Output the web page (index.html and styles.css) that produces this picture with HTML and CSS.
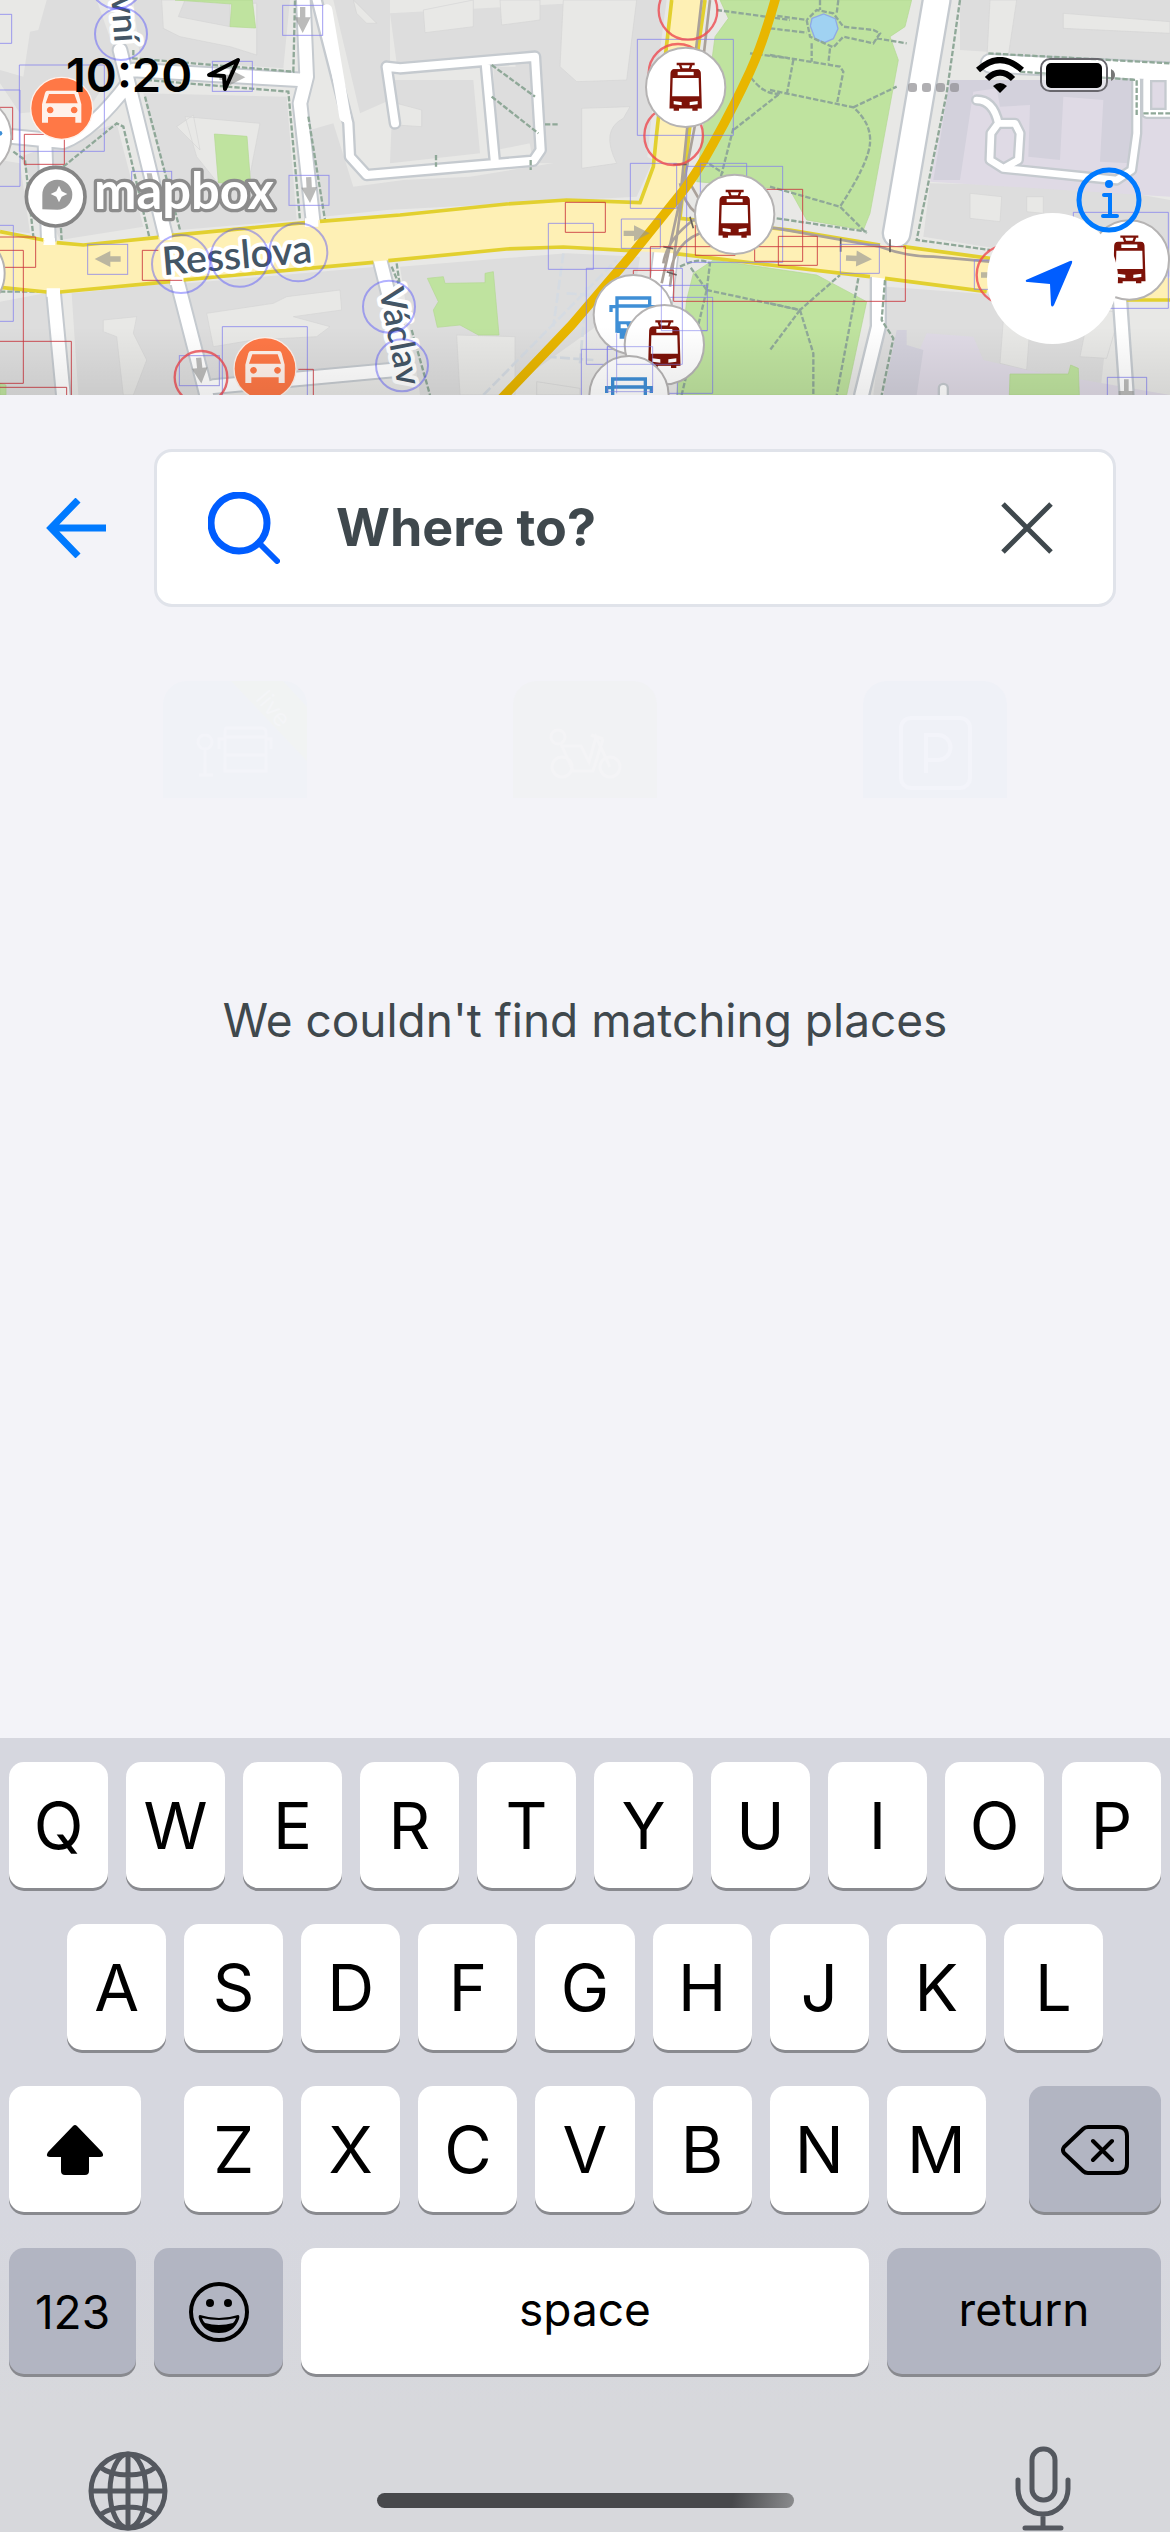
FILE: index.html
```html
<!DOCTYPE html>
<html lang="en">
<head>
<meta charset="utf-8">
<meta name="viewport" content="width=device-width, initial-scale=1">
<title>Where to?</title>
<link rel="stylesheet" href="styles.css">
</head>
<body>
<header class="map">
  <svg class="map-art" viewBox="0 0 3510 1185" role="img" aria-label="Map around Resslova">
    <defs>
      <linearGradient id="fade" x1="0" y1="0" x2="0" y2="1"><stop offset="0" stop-opacity="0"/><stop offset="1" stop-opacity=".08"/></linearGradient>
      <g id="tram">
        <circle r="119" fill="#fff" stroke="#b5b3b3" stroke-width="6"/>
        <g fill="none" stroke="#7d1208" stroke-width="7"><path d="M-27-70H27M-17-68l5 14M17-68l-5 14M-15-54H15" /><path d="M-34-51H34q7 0 8 8L45 60h-90l3-103q1-8 8-8z"/></g>
        <path fill="#7d1208" fill-rule="evenodd" d="M-36-54H36q7 0 7 14v12H-43v-12q0-14 7-14zM-24-47v11H24v-11zM-45 27H45V62H36v8H20v-8h-40v8h-16v-8h-9zM-36 41v10l24 3V44zM36 41 12 44v10l24-3z"/>
      </g>
      <g id="bus">
        <circle r="119" fill="#fff" stroke="#b5b3b3" stroke-width="6"/>
        <g fill="none" stroke="#3f8fd6" stroke-width="10"><path d="M-49-50H49V49H-49zM-49-26H49M-49-24H-67V-8M49-24H67V-8"/></g>
        <path fill="#3f8fd6" fill-rule="evenodd" d="M-49 20H49V55H41V72H22V55H-22V72H-41V55H-49zM-38 29v12h22l-5-12zM38 29v12H16l5-12z"/>
      </g>
      <g id="car">
        <circle r="93" fill="#ff7846" stroke="#fff1ea" stroke-width="4"/>
        <path fill="#fff1ea" fill-rule="evenodd" d="M-42-53H42q6 0 8 7L59-12V43H41V26H-41V43H-59V-12L-50-46q2-7 8-7zM-38-43-48-15H48L38-43zM-35-5a10 10 0 1 0 1 0zM37-5a10 10 0 1 0 1 0z"/>
      </g>
      <path id="arrow" d="M-39-8H-8V-24L39 0-8 24V8H-39z"/>
      <rect id="tag" x="-60" y="-45" width="120" height="90"/>
    </defs>
    <rect width="3510" height="1185" fill="#e8e8e6"/>

    <!-- building blocks -->
    <g fill="#ddd">
      <path d="M140 0H290L350 170 330 230 270 320 60 340 0 250V210L70 230 90 95 115 90zM400 0H870L850 205 420 175zM60 470 350 370 430 680 180 720zM430 280 860 290 890 660 540 690 440 330zM0 480 60 490 90 700 0 690zM0 905 135 880 200 1185H0zM215 880 510 850 600 1185H235zM560 850 1130 800 1180 1100 620 1160zM1000 0H1170V300L1080 340zM930 390 1000 370 1060 560 1210 540 1410 530 1900 450 1960 480 1910 590 1160 630 970 650z"/>
      <path d="M1170 40 1900 0H2000L1960 300 1940 490 1600 490 1540 160 1190 190zM1180 240 1420 240 1440 460 1170 490zM1480 200 1590 200 1590 430 1490 450zM1200 800 1700 760 1920 770 1900 900 1500 1185H1260z"/>
      <path d="M2880 0H3510V190L2880 150zM2790 550 3290 560 3510 600V830L2770 710zM2660 860 3060 890 3330 910 3300 1185H2620z"/>
    </g>
    <g fill="#e8e8e6" stroke="#d5d5d4" stroke-width="2">
      <path d="M485 0H555L535 50 690 80V10H770V165L690 140 540 110 490 85zM555 350 780 370 745 550 650 545 590 470zM530 380 580 345 600 450zM620 940 820 910 860 890 1020 870 1025 930 880 950 990 980 950 1010 760 1020 640 1040zM310 960 410 950 400 1000 440 1080 400 1185H370L350 1010 310 995zM1060 0 1130 70 1100 70 1070 40z"/>
      <path d="M1270 30 1420 0V80L1275 98zM1500 0H1620V60L1505 75zM1690 0 1910 0 1880 240 1730 245 1680 200zM1745 325 1890 320 1870 355Q1800 390 1850 490L1745 505zM1190 310 1265 330V380L1190 375zM1370 1005 1545 1010V1185H1380zM1610 1145 1740 1165V1185H1610z"/>
      <path d="M2970 0H3050L3020 200 2960 190zM3190 40 3510 65V100L3190 85zM2910 580 3005 590 3000 665 2910 655zM3080 590 3130 590 3130 640 3080 635zM3010 960 3090 975 3080 1110 3000 1090zM3270 920 3360 940 3320 1075 3240 1070z"/>
    </g>
    <g fill="#dfdae5"><path d="M2850 240 3510 240V590L2790 545zM2780 1000 2920 1010 2950 1080 3080 1110 3510 1185H2700z"/></g>
    <path fill="#d3d1dc" d="M2850 240 3410 240 3390 490 3300 485 3310 300 3190 290 3180 480 3085 470 3090 315 3000 320 2990 265 2920 275 2880 540 2800 540zM2690 990 2720 990 2720 1035 2770 1050 2750 1185H2650z"/>

    <!-- parks and pond -->
    <g fill="#bfe39f" stroke="#b3d893" stroke-width="2">
      <path d="M2160 0H2735L2715 80 2670 110 2695 180 2610 640 2590 690 2420 660 2370 570 2090 545 2120 300 2145 110 2185 55zM2060 900 2080 820 2140 780 2450 825 2600 905 2540 1185H2030zM1282 835 1330 830 1335 850 1455 848V820L1480 815 1497 1005 1435 1005 1380 975 1312 982 1300 930 1315 905zM643 402 741 409 752 553 655 548zM525 0H757L767 84 690 80 695 12zM3030 1122H3205L3212 1095 3235 1105 3238 1185H3028zM0 1150 18 1155V1185H0z"/>
    </g>
    <path fill="#a0d2f2" stroke="#8fa9e6" stroke-width="4" d="m2436 55 35-13 35 14 8 30-14 30-27 12-28-12-14-38z"/>

    <!-- minor roads: casing, then fill -->
    <g fill="none" stroke="#c5cacf" stroke-linecap="round" stroke-linejoin="round">
      <g stroke-width="50"><path d="M360 150 385 250 500 720 620 1185M385 250Q280 390 190 425L40 410M135 430 145 720M160 870 190 1185M910 0 920 230 900 310 940 670M400 210 910 240M1140 780 1220 1100M640 1160 1180 1110"/></g>
      <path stroke-width="38" d="M950 0 1045 370 1050 470 1100 525 1300 508 1600 482 1622 450 1605 170 1200 205 1160 200 1185 370M1457 190 1485 490"/>
      <g stroke-width="34"><path d="M2930 300Q2980 300 2995 370L2973 400 2970 480 3010 505 3350 540 3395 510 3410 400V240M2995 370H3045L3060 400 3055 480 3010 505M3455 230H3510V340H3440V240M2830 1185V1165"/></g>
      <path stroke-width="90" d="M2810 0 2690 700"/><path stroke-width="52" d="M2635 830V980L2585 1185"/><path stroke-width="50" d="M3360 900 3380 1185"/>
      <path stroke-width="62" d="M2970 190 3510 215"/>
      <path stroke-width="80" d="M2000 740 1970 980"/>
    </g>
    <g fill="none" stroke="#fff" stroke-linecap="round" stroke-linejoin="round">
      <path stroke-width="38" d="M360 150 385 250 500 720 620 1185M385 250Q280 390 190 425L40 410M135 430 145 720M160 870 190 1185M910 0 920 230 900 310 940 670M400 210 910 240M1140 780 1220 1100M640 1160 1180 1110"/>
      <path stroke-width="24" d="M950 0 1045 370 1050 470 1100 525 1300 508 1600 482 1622 450 1605 170 1200 205 1160 200 1185 370M1457 190 1485 490"/>
      <path stroke-width="20" d="M2930 300Q2980 300 2995 370L2973 400 2970 480 3010 505 3350 540 3395 510 3410 400V240M2995 370H3045L3060 400 3055 480 3010 505M3455 230H3510V340H3440V240M2830 1185V1165"/>
      <path stroke-width="76" d="M2810 0 2690 700"/><path stroke-width="38" d="M2635 830V980L2585 1185"/><path stroke-width="36" d="M3360 900 3380 1185"/>
      <path stroke-width="50" d="M2970 190 3510 215"/><path stroke-width="70" d="M2000 740 1970 980"/>
      <path stroke-width="34" d="M980 30 1035 350"/>
    </g>

    <!-- footpaths -->
    <g fill="none" stroke="#8fa898" stroke-width="7" stroke-dasharray="16 6">
      <path d="M400 150V175L880 215 885 0M440 240 865 275 900 660M435 290 540 690M190 500 350 370 370 380 450 720M40 455 75 480 100 710M180 640 185 720M925 350 975 660M0 875 130 875M1190 790 1200 860M1235 990 1290 1185M1475 195 1605 290M1475 290 1615 400M1635 373H1675M1308 465V500M1592 480V510"/>
      <path d="M2040 800Q2100 770 2130 790L2120 870 2045 1185M2120 870 2400 930M2120 870 2070 800M2200 385 2160 540M2110 480 2170 520M2240 215Q2290 290 2340 280L2200 390M2250 160 2370 175M2150 30 2370 60"/>
      <path d="M2310 45 2420 60 2430 110 2500 142 2530 110 2620 130 2640 100 2620 90 2530 80 2500 40 2450 30 2420 60M2310 85 2420 98M2435 130V185M2490 145 2485 190M2310 165 2520 200 2530 215 2510 315M2380 180 2360 285M2310 270 2560 322Q2615 370 2610 430T2520 620M2560 322 2690 260M2310 560 2520 620 2600 700M2330 655 2600 695M2460 0V30M2515 0 2510 40M2630 115 2720 130M2880 0 2840 280 2750 720 2970 750M2965 160 3510 190M3060 215 3410 240V350M3430 340H3510M2310 910 2400 930 2520 825M2400 930 2310 1050M2400 930 2440 1060 2440 1185M2575 835 2545 1000 2510 1185M2655 840 2645 960 2680 1015 2645 1185M1175 800 1200 860"/>
    </g>
    <g fill="none" stroke="#d5dbe2" stroke-width="8" stroke-dasharray="30 10"><path d="M1690 760 1660 980M1700 880 1850 890M1640 1070 1780 1080M1450 1185 1850 780M1740 1090 1760 860"/></g>

    <!-- main street -->
    <path fill="#fef0b5" d="M0 695 130 720 250 735 900 665 1520 612 1700 600 1920 608 1960 500 1970 400 2015 0H2115L2095 140 2040 655 2370 690 2640 735 2970 775 3510 835V902L2960 875 2610 830 2020 760 1690 741 1520 747 800 815 200 875 0 862z"/>
    <g fill="none" stroke="#e2d02f" stroke-width="11">
      <path d="M0 695 130 720M170 728 250 735 475 712M515 706 915 668M960 664 1200 645 1520 612 1700 600 1920 608 1960 500 1970 400 2015 0M2115 0 2095 140 2040 655 2370 690 2640 735M2710 740 2970 775M0 862 140 876M180 876 510 845M550 840 1120 787M1165 782 1520 747 1690 741 1890 752M2020 760 2310 795 2610 830M2655 835 2960 875M3380 900H3510"/>
    </g>
    <path d="M135 715H165V735H130zM478 700H515V720H480zM915 655H955V680H915zM140 865H180V890H140zM515 830H550V855H510z" fill="#fff"/>
    <g fill="none" stroke="#aaa19a" stroke-width="8">
      <path d="M2130 0 2090 350 2055 530 2010 860M2105 0 2065 350 2040 600 1985 850M2070 550 2110 620M2040 550Q2050 610 2090 640M1990 790Q2000 720 2080 660L2330 685 2640 740Q2720 770 2800 770L2970 785M2010 830Q2020 730 2100 700"/>
      <path stroke="#66615f" stroke-width="5" d="M2522 715V755M2670 718V757M2020 493H2060M1990 740 2020 746M2000 815 2030 825M2070 650 2080 685"/>
    </g>
    <path fill="none" stroke="#e8b600" stroke-width="28" stroke-linejoin="round" d="M2328-10C2300 90 2275 160 2250 215 2220 280 2190 340 2140 430 2110 485 2085 525 2055 565L1890 770 1715 975 1505 1195"/>

    <!-- one-way arrows -->
    <g fill="#979695" fill-opacity=".65">
      <use href="#arrow" transform="translate(323 777) rotate(180)"/><use href="#arrow" transform="translate(1910 700)"/><use href="#arrow" transform="translate(2577 776) rotate(3)"/><use href="#arrow" transform="translate(908 60) rotate(90)"/><use href="#arrow" transform="translate(928 570) rotate(87)"/><use href="#arrow" transform="translate(600 1112) rotate(84)"/><use href="#arrow" transform="translate(697 232)"/><path d="M440 520h15l8 35h-17zM3372 1138h14v35h15v12h-45v-12h16zM2943 817h25v16h-25z"/>
    </g>

    <!-- placement boxes -->
    <g fill="none" stroke="#817eee" stroke-opacity=".75" stroke-width="3">
      <path d="M-5 43H35V130H-5M-5 270H60V559H-5M-5 676H40V964H-5M58 195H313V454H58zM667 980H922V1195H667z"/>
      <use href="#tag" x="908" y="61"/><use href="#tag" x="697" y="229"/><use href="#tag" x="455" y="559"/><use href="#tag" x="927" y="571"/><use href="#tag" x="323" y="778"/><use href="#tag" x="598" y="1112"/>
      <path d="M1912 118H2200V406H1912zM1891 490H2030V625H1891zM2101 490H2240V625H2101zM1645 670H1780V808H1645zM1864 657H1981V745H1864zM2060 499H2348V787H2060zM1759 805H2047V1093H1759zM1984 856H2122V992H1984zM1850 892H2138V1180H1850zM1744 1048H2032V1195H1744zM1822 1040H1958V1175H1822z"/>
      <path d="M2521 733H2638V820H2521zM2923 780H3040V868H2923zM3322 1132H3440V1195H3322zM3220 637H3505V925H3220z"/>
    </g>
    <g fill="none" stroke="#c9353d" stroke-opacity=".85" stroke-width="3">
      <path d="M-5 322H38V420M73 403H193V493H73zM-5 711H107V802H-5M-5 751H70V1150H-5M-5 1024H214V1190M-5 1162H200V1190M547 841H427V751H475M895 1108H940V1190M1696 607H1816V697H1696zM2086 675V766H2206M1951 840V740H2716V904H2021V811H1900V900M2290 568H2408V784H2264V740M2335 709H2452V796H2335z"/>
    </g>
    <g fill="none" stroke="#ee4a50" stroke-opacity=".8" stroke-width="7"><circle cx="603" cy="1132" r="79"/><circle cx="2064" cy="31" r="88"/><circle cx="2034" cy="220" r="88"/><circle cx="2021" cy="407" r="88"/><circle cx="3018" cy="825" r="88"/></g>

    <!-- street names -->
    <g class="street">
      <text transform="translate(490 826) rotate(-5)">Resslova</text>
      <text class="side-street" transform="translate(1137 870) rotate(79)">Václav</text>
      <text class="side-street" transform="translate(334 -10) rotate(86)">vní</text>
    </g>
    <g fill="none" stroke="#4844ff" stroke-opacity=".42" stroke-width="6"><circle cx="543" cy="792" r="87"/><circle cx="719" cy="773" r="87"/><circle cx="895" cy="757" r="87"/><circle cx="1167" cy="920" r="78"/><circle cx="1206" cy="1096" r="78"/><circle cx="363" cy="102" r="78"/><circle cx="349" cy="-52" r="78"/></g>

    <!-- stops and car sharing -->
    <circle cx="-85" cy="410" r="119" fill="#fff" stroke="#b5b3b3" stroke-width="6"/><circle cx="0" cy="400" r="7" fill="#3f8fd6"/><circle cx="-105" cy="820" r="119" fill="#fff" stroke="#b5b3b3" stroke-width="6"/>
    <use href="#car" x="185" y="325"/><use href="#car" x="795" y="1106"/>
    <use href="#tram" x="2057" y="262"/><use href="#tram" x="2204" y="643"/>
    <use href="#bus" x="1900" y="944"/><use href="#tram" x="1993" y="1034"/><use href="#bus" x="1887" y="1187"/>
    <use href="#tram" x="3388" y="780"/>
    <path fill="none" stroke="#817eee" stroke-width="3" stroke-opacity=".6" d="M1984 856V992H2122M1850 1093H2047V900M1822 1040H1958V1175H1822zM1850 1000V1180"/>

    <!-- provider logo -->
    <circle cx="167" cy="590" r="88" fill="#fff" stroke="#858585" stroke-width="11"/>
    <path fill="#999" d="M127 628V585a45 45 0 1 1 45 44z"/><path fill="#fff" d="m177 557 8 17 17 8-17 8-8 17-8-17-17-8 17-8z"/>
    <text class="provider" x="282" y="628">mapbox</text>
    <rect y="980" width="3510" height="205" fill="url(#fade)"/>
  </svg>

  <div class="status">
    <div class="status-side">
      <span class="clock">10:20</span>
      <svg width="36" height="36" viewBox="0 0 36 36" aria-label="Location in use"><path d="M3 18 32 3 19 32 18 19z" fill="none" stroke="#000" stroke-width="4" stroke-linejoin="round"/></svg>
    </div>
    <div class="status-side status-right">
      <svg class="dots" width="52" height="10" viewBox="0 0 52 10" fill="#8e8d91" fill-opacity=".7"><rect width="9" height="9" rx="3"/><rect x="14" width="9" height="9" rx="3"/><rect x="28" width="9" height="9" rx="3"/><rect x="42" width="9" height="9" rx="3"/></svg>
      <svg width="48" height="36" viewBox="0 0 48 36" aria-label="Wi-Fi"><g fill="none" stroke="#000" stroke-width="6"><path d="M2 13Q24-7 46 13M11 22Q24 9 37 22"/></g><path d="M24 36 17 29q7-6 14 0z"/></svg>
      <svg width="76" height="36" viewBox="0 0 76 36" aria-label="Battery full"><rect x="1" y="2" width="66" height="32" rx="9" fill="#fff" fill-opacity=".4" stroke="#68676d" stroke-width="2"/><rect x="6" y="6" width="56" height="25" rx="5"/><path d="M71 12q4 2 4 6t-4 6z" fill="#777"/></svg>
    </div>
  </div>

  <button class="locate" aria-label="My location"><svg width="48" height="48" viewBox="0 0 48 48"><path d="M1 20 45 1q3-1 2 2L29 45q-2 3-3 0L25 24 3 22q-3 0-2-2z" fill="#005dff"/></svg></button>
  <button class="info" aria-label="Map information"><svg width="66" height="66" viewBox="0 0 66 66" fill="none" stroke="#007aff"><circle cx="33" cy="33" r="30" stroke-width="5"/><circle cx="33" cy="17" r="4" fill="#007aff" stroke="none"/><path stroke-width="4" stroke-linecap="round" d="M28 28h6v20M27 49h14"/></svg></button>
</header>

<main class="panel">
  <form class="search">
    <button class="back" type="button" aria-label="Back"><svg width="60" height="60" viewBox="0 0 60 60" fill="none" stroke="#007aff" stroke-width="7"><path d="M60 30H6M32 2 5 30 32 58"/></svg></button>
    <div class="field">
      <svg width="72" height="72" viewBox="0 0 72 72" fill="none" stroke="#005dff"><circle cx="31" cy="31" r="28" stroke-width="7"/><path d="M52 52 69 69" stroke-width="6" stroke-linecap="round"/></svg>
      <input class="query" type="text" placeholder="Where to?" aria-label="Where to?">
      <button class="clear" type="reset" aria-label="Clear"><svg width="52" height="52" viewBox="0 0 52 52" stroke="#3f484d" stroke-width="5"><path d="M2 2 50 50M50 2 2 50"/></svg></button>
    </div>
  </form>

  <div class="shortcuts">
    <div class="tile tile-transit">
      <svg viewBox="0 0 144 117" fill="none" stroke="#f3f4f9" stroke-width="3"><path d="M68 0H120L144 26V80z" fill="#f1f3f3" stroke="none"/><circle cx="42" cy="61" r="7"/><path d="M42 68v25M36 94h14M63 47h36q4 0 4 5v38H62V52q0-5 1-5zM62 56h40M62 74h40M62 58h-6v10M102 58h6v10"/></svg>
      <span class="live">live</span>
    </div>
    <div class="tile tile-bike">
      <svg viewBox="0 0 144 117" fill="none" stroke="#f4f4f6" stroke-width="3"><circle cx="49" cy="86" r="10"/><circle cx="97" cy="86" r="10"/><circle cx="45" cy="56" r="7"/><path d="M48 63 60 90H80L90 58M48 65H68l8 16 7-25 14 30M78 54l12 4"/></svg>
    </div>
    <div class="tile tile-parking">
      <svg viewBox="0 0 144 117" fill="none" stroke="#f3f4fa" stroke-width="4"><rect x="38" y="37" width="69" height="70" rx="10"/><path d="M63 92V54H75a12 12 0 0 1 0 25H63"/></svg>
    </div>
  </div>
  <p class="message">We couldn't find matching places</p>
</main>

<section class="keyboard" aria-label="Keyboard">
  <div class="row row-ten"><button class="key">Q</button><button class="key">W</button><button class="key">E</button><button class="key">R</button><button class="key">T</button><button class="key">Y</button><button class="key">U</button><button class="key">I</button><button class="key">O</button><button class="key">P</button></div>
  <div class="row row-nine"><button class="key">A</button><button class="key">S</button><button class="key">D</button><button class="key">F</button><button class="key">G</button><button class="key">H</button><button class="key">J</button><button class="key">K</button><button class="key">L</button></div>
  <div class="row row-shift">
    <button class="key" aria-label="Shift"><svg width="58" height="50" viewBox="0 0 58 50"><path d="M27 1q2-2 4 0L56 27q3 5-2 5H43V46q0 4-4 4H19q-4 0-4-4V32H4q-5 0-2-5z"/></svg></button>
    <div class="row row-seven"><button class="key">Z</button><button class="key">X</button><button class="key">C</button><button class="key">V</button><button class="key">B</button><button class="key">N</button><button class="key">M</button></div>
    <button class="key key-dark" aria-label="Delete"><svg width="68" height="50" viewBox="0 0 68 50" fill="none" stroke="#000" stroke-width="4" stroke-linejoin="round" stroke-linecap="round"><path d="M27 2H57q9 0 9 9V39q0 9-9 9H27q-3 0-5-2L3 28q-2-3 0-6L22 4q2-2 5-2zM32 16 51 35M51 16 32 35"/></svg></button>
  </div>
  <div class="row row-space">
    <button class="key key-dark key-number">123</button>
    <button class="key key-dark" aria-label="Emoji"><svg width="60" height="60" viewBox="0 0 60 60"><circle cx="30" cy="30" r="28" fill="none" stroke="#000" stroke-width="4"/><ellipse cx="21" cy="21" rx="4" ry="4"/><ellipse cx="39" cy="21" rx="4" ry="4"/><path fill-rule="evenodd" d="M11 33q19 6 38 0 2 0 1 4-5 14-20 14T10 37q-1-4 1-4zM13 36q1 3 3 5 14 4 28 0 2-2 3-5-17 4-34 0z"/></svg></button>
    <button class="key key-word">space</button>
    <button class="key key-dark key-word">return</button>
  </div>
  <div class="dock">
    <button class="dock-key" aria-label="Next keyboard"><svg width="80" height="84" viewBox="0 0 80 84" fill="none" stroke="#54585f" stroke-width="5"><circle cx="40" cy="43" r="37"/><ellipse cx="40" cy="43" rx="18" ry="37"/><path d="M40 5V81M3 43H77M12 19Q22 27 40 27T68 19M12 67Q22 59 40 59T68 67"/></svg></button>
    <span class="home"></span>
    <button class="dock-key" aria-label="Dictate"><svg width="56" height="86" viewBox="0 0 56 86" fill="none" stroke="#54585f" stroke-width="5" stroke-linecap="round"><rect x="17" y="3" width="23" height="51" rx="11"/><path d="M3 34V43a25 25 0 0 0 50 0V34M28 69V82M10 82H46"/></svg></button>
  </div>
</section>
</body>
</html>
```
FILE: styles.css
```css
* {
  box-sizing: border-box;
}

body {
  margin: 0;
  min-height: 100vh;
  display: flex;
  flex-direction: column;
  background: #f3f3f8;
  font-family: Inter, "Liberation Sans", sans-serif;
  color: #3f484d;
}

button {
  margin: 0;
  padding: 0;
  border: 0;
  background: none;
  font: inherit;
  color: #000;
}

svg {
  display: block;
}

/* map */
.map {
  position: relative;
}

.map-art {
  width: 100%;
  height: auto;
}

.street {
  font: 600 118px Lato, sans-serif;
  fill: #445666;
  stroke: #fff;
  stroke-width: 24px;
  stroke-linejoin: round;
  paint-order: stroke;
}

.side-street {
  font-size: 104px;
}

.provider {
  font: 700 152px Lato, sans-serif;
  fill: #fff;
  stroke: #8c8c8c;
  stroke-width: 20px;
  stroke-linejoin: round;
  paint-order: stroke;
}

.status {
  position: absolute;
  inset: 0 0 auto;
  padding: 51px 54px 0 66px;
  display: flex;
  justify-content: space-between;
}

.status-side {
  display: flex;
  align-items: center;
  gap: 14px;
  height: 48px;
}

.status-right {
  gap: 16px;
}

.clock {
  font-size: 47px;
  line-height: 48px;
  font-weight: 600;
  color: #000;
}

.dots {
  align-self: flex-end;
  margin-bottom: 6px;
}

.locate,
.info {
  position: absolute;
  display: grid;
  place-items: center;
  border-radius: 50%;
}

.locate {
  top: 213px;
  right: 52px;
  width: 131px;
  height: 131px;
  padding: 10px 8px 0 0;
  background: #fff;
}

.info {
  top: 167px;
  right: 28px;
}

/* search panel */
.panel {
  flex: 1;
}

.search {
  display: flex;
  align-items: center;
  gap: 48px;
  padding: 54px 54px 0 46px;
}

.field {
  flex: 1;
  min-width: 0;
  height: 158px;
  padding: 0 60px 0 51px;
  display: flex;
  align-items: center;
  gap: 56px;
  background: #fff;
  border: 3px solid #e0e3ea;
  border-radius: 18px;
}

.query {
  flex: 1;
  min-width: 0;
  padding: 0;
  border: 0;
  outline: 0;
  background: none;
  font: 700 52px/64px Inter, "Liberation Sans", sans-serif;
  color: #3f484d;
}

.query::placeholder {
  color: #3f484d;
  opacity: 1;
}

.shortcuts {
  display: grid;
  grid-template-columns: repeat(3, 1fr);
  justify-items: center;
  padding: 74px 60px 0;
}

.tile {
  position: relative;
  width: 144px;
  height: 117px;
  border-radius: 24px 24px 0 0;
  overflow: hidden;
}

.tile-transit {
  background: #f0f2f7;
}

.tile-bike {
  background: #f1f2f4;
}

.tile-parking {
  background: #eff1f7;
}

.live {
  position: absolute;
  top: 12px;
  right: 14px;
  font-size: 24px;
  line-height: 32px;
  color: #f4f5f7;
  transform: rotate(50deg);
}

.message {
  margin: 190px 0 0;
  font-size: 46px;
  line-height: 64px;
  text-align: center;
}

/* keyboard */
.keyboard {
  display: flex;
  flex-direction: column;
  gap: 36px;
  padding: 24px 9px 0;
  background: linear-gradient(#d6d7df 60%, #d7d8dc 85%);
}

.row {
  display: grid;
  gap: 18px;
}

.row-ten {
  grid-template-columns: repeat(10, 1fr);
}

.row-nine {
  grid-template-columns: repeat(9, 1fr);
  padding: 0 58px;
}

.row-shift {
  grid-template-columns: 132fr 801fr 132fr;
  gap: 43px;
}

.row-seven {
  grid-template-columns: repeat(7, 1fr);
}

.row-space {
  grid-template-columns: 127fr 129fr 568fr 274fr;
}

.key {
  display: grid;
  place-items: center;
  height: 126px;
  padding-top: 2px;
  border-radius: 15px;
  background: #fff;
  box-shadow: 0 3px 0 #898a8f;
  font-size: 65px;
  line-height: 80px;
}

.key-dark {
  background: #b2b5c2;
}

.key-number,
.key-word {
  font-size: 46px;
}

.key-word {
  padding: 0 0 4px;
}

.dock {
  display: grid;
  grid-template-columns: 1fr 417px 1fr;
  align-items: end;
  height: 122px;
  padding: 0 79px;
}

.dock-key:last-child {
  justify-self: end;
  padding-right: 11px;
}

.home {
  height: 15px;
  margin-bottom: 24px;
  border-radius: 8px;
  background: linear-gradient(100deg, #47484b 85%, #8b8c8e);
}
```
